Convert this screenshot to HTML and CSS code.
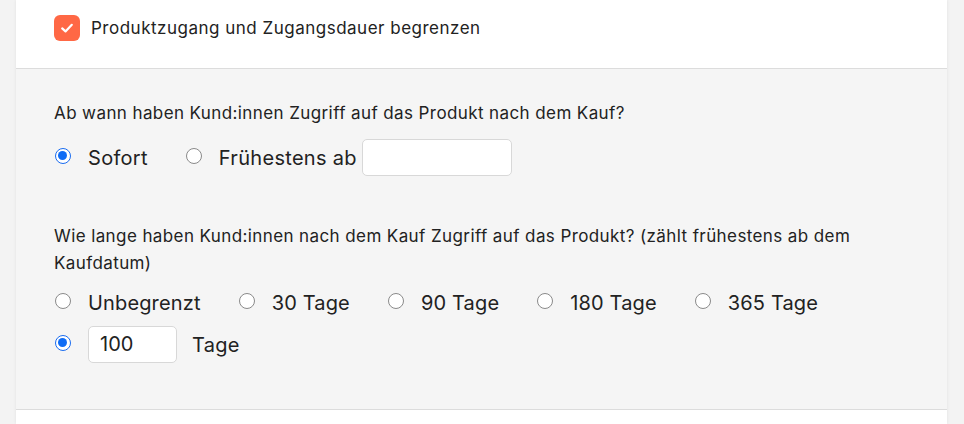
FILE: index.html
```html
<!DOCTYPE html>
<html lang="de">
<head>
<meta charset="utf-8">
<link rel="stylesheet" href="styles.css">
</head>
<body>
<div class="card">
  <div class="top">
    <label class="check">
      <span class="box">
        <svg width="16" height="16" viewBox="0 0 16 16"><path d="M3.2 8.4 L6.5 11.4 L12.8 4.8" fill="none" stroke="#fff" stroke-width="2.2" stroke-linecap="round" stroke-linejoin="round"/></svg>
      </span>
      <span class="check-label">Produktzugang und Zugangsdauer begrenzen</span>
    </label>
  </div>
  <div class="panel">
    <p class="question q1">Ab wann haben Kund:innen Zugriff auf das Produkt nach dem Kauf?</p>
    <div class="row row1">
      <label class="opt"><span class="radio on"></span><span class="lbl">Sofort</span></label>
      <label class="opt"><span class="radio"></span><span class="lbl">Frühestens ab</span><span class="field date"></span></label>
    </div>
    <p class="question q2">Wie lange haben Kund:innen nach dem Kauf Zugriff auf das Produkt? (zählt frühestens ab dem Kaufdatum)</p>
    <div class="row row3">
      <label class="opt"><span class="radio"></span><span class="lbl">Unbegrenzt</span></label>
      <label class="opt"><span class="radio"></span><span class="lbl">30 Tage</span></label>
      <label class="opt"><span class="radio"></span><span class="lbl">90 Tage</span></label>
      <label class="opt"><span class="radio"></span><span class="lbl">180 Tage</span></label>
      <label class="opt"><span class="radio"></span><span class="lbl">365 Tage</span></label>
    </div>
    <div class="row row4">
      <label class="opt"><span class="radio on"></span><span class="field days">100</span><span class="lbl tage">Tage</span></label>
    </div>
  </div>
  <div class="bottom"></div>
</div>
</body>
</html>
```
FILE: styles.css
```css
html, body {
  margin: 0;
  padding: 0;
}
body {
  background: #f3f3f3;
  font-family: Inter, "Noto Sans", sans-serif;
  color: #222;
  width: 964px;
  height: 424px;
  overflow: hidden;
}
.card {
  margin: 0 17px 0 16px;
  background: #fff;
  box-shadow: 0 0 3px rgba(0,0,0,0.08);
  height: 424px;
}
.top {
  height: 69px;
  box-sizing: border-box;
  padding: 15px 38px 0;
  border-bottom: 1px solid #dcdcdc;
}
.check {
  display: flex;
  align-items: center;
  gap: 11px;
  height: 26px;
}
.box {
  width: 26px;
  height: 26px;
  border-radius: 6px;
  background: #ff6845;
  display: flex;
  align-items: center;
  justify-content: center;
}
.check-label {
  font-size: 17px;
  letter-spacing: 0.5px;
}
.panel {
  background: #f5f5f5;
  padding: 31px 38px 46px;
  border-bottom: 1px solid #dcdcdc;
}
.question {
  margin: 0;
  font-size: 17px;
  line-height: 27px;
  letter-spacing: 0.4px;
}
.row {
  display: flex;
  align-items: center;
  gap: 37px;
}
.row1 {
  margin-top: 12px;
  height: 37px;
}
.q2 {
  margin-top: 47px;
}
.row3 {
  margin-top: 12px;
  height: 27px;
}
.row3 .lbl {
  letter-spacing: 0.15px;
}
.row4 {
  margin-top: 10px;
  height: 37px;
}
.opt {
  display: flex;
  align-items: center;
}
.radio {
  width: 16px;
  height: 16px;
  box-sizing: border-box;
  border: 1px solid #8a8a8a;
  border-radius: 50%;
  background: #fff;
  margin: 0 17px 0 1px;
  position: relative;
  top: -2px;
}
.radio.on {
  border: 1.5px solid #1a6cf0;
  background: #fff;
}
.radio.on::after {
  content: "";
  position: absolute;
  left: 2px;
  top: 2px;
  width: 9px;
  height: 9px;
  border-radius: 50%;
  background: #0f6cf5;
}
.lbl {
  font-size: 20px;
  letter-spacing: 0.3px;
}
.field {
  display: block;
  height: 37px;
  box-sizing: border-box;
  background: #fff;
  border: 1px solid #d8d8d8;
  border-radius: 5px;
  font-size: 20px;
  line-height: 35px;
  padding: 0 11px;
}
.date {
  width: 150px;
  margin-left: 5px;
}
.days {
  width: 89px;
}
.tage {
  margin-left: 15px;
}
.bottom {
  height: 20px;
}
```
